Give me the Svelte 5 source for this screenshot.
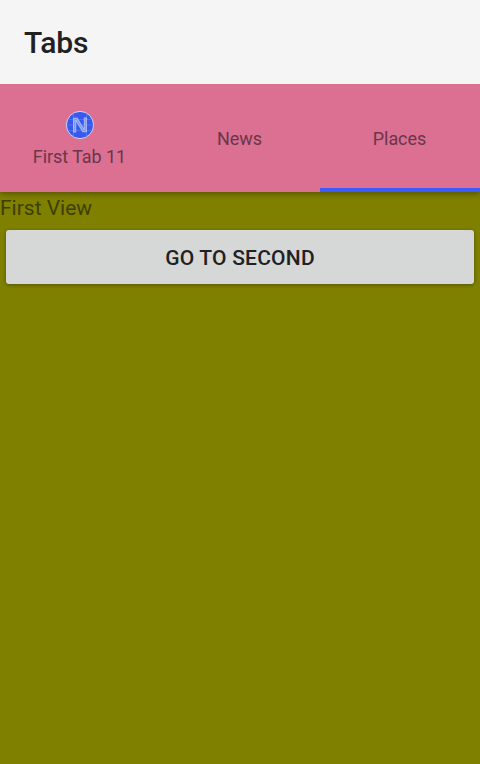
<script>
  const tabs = [
    { title: 'First Tab 11', icon: true },
    { title: 'News' },
    { title: 'Places' }
  ];
  const selected = 2;
</script>

<div class="page">
  <header><h1>Tabs</h1></header>
  <nav>
    {#each tabs as tab, i}
      <div class="tab" class:selected={i === selected}>
        {#if tab.icon}
          <svg width="30" height="30" viewBox="0 0 30 30">
            <circle cx="15" cy="15" r="13.6" fill="#3759ee" stroke="#d3d5f3" stroke-width="1" />
            <path d="M3 9.5H27M3 20.5H27M1.5 15H28.5M8.5 3.5V26.5M21.5 3.5V26.5" stroke="#5c7af3" stroke-width=".7" />
            <g fill="none" stroke-linejoin="miter">
              <path d="M9.6 22.4V9.4H11.6L18.4 20.6H20.4V7.6" stroke="#a9bbfa" stroke-width="3.2" />
              <path d="M9.6 21.6V9.4H11.6L18.4 20.6H20.4V8.4" stroke="#7f98f6" stroke-width="1.4" />
            </g>
          </svg>
        {/if}
        <span>{tab.title}</span>
      </div>
    {/each}
  </nav>
  <main>
    <p>First View</p>
    <button>GO TO SECOND</button>
  </main>
</div>

<style>
  .page {
    height: 764px;
    display: flex;
    flex-direction: column;
    overflow: hidden;
    background: #808000;
    font-family: Roboto, "Liberation Sans", sans-serif;
  }
  header {
    height: 84px;
    display: flex;
    align-items: center;
    padding: 2px 24px 0;
    box-sizing: border-box;
    background: #f5f5f5;
    z-index: 2;
  }
  h1 {
    margin: 0;
    font-size: 30px;
    line-height: 36px;
    font-weight: 500;
    letter-spacing: -.1px;
    color: #212121;
  }
  nav {
    height: 108px;
    display: grid;
    grid-template-columns: repeat(3, 1fr);
    background: #db7093;
    box-shadow: 0 2px 6px rgba(0, 0, 0, .35);
    z-index: 1;
  }
  .tab {
    display: flex;
    flex-direction: column;
    align-items: center;
    justify-content: center;
    box-sizing: border-box;
    padding-top: 2px;
    font-size: 18px;
    line-height: 22px;
    letter-spacing: -.06px;
    color: #6a3648;
  }
  .tab svg {
    display: block;
    margin-bottom: 6px;
  }
  .tab span {
    padding-right: 1px;
  }
  .tab.selected {
    box-shadow: inset 0 -4px #3d5afe;
  }
  main {
    flex: 1;
    display: flex;
    flex-direction: column;
  }
  p {
    margin: 0;
    padding-top: 3px;
    font-size: 21px;
    line-height: 26px;
    color: #3e3e00;
  }
  button {
    height: 54px;
    margin: 9px 6px 0;
    padding: 2px 0 0;
    border: 0;
    border-radius: 3px;
    background: #d6d7d7;
    box-shadow: 0 1px 4px rgba(0, 0, 0, .35);
    font-family: inherit;
    font-size: 21px;
    font-weight: 500;
    line-height: 26px;
    letter-spacing: .22px;
    color: #212121;
  }
</style>
